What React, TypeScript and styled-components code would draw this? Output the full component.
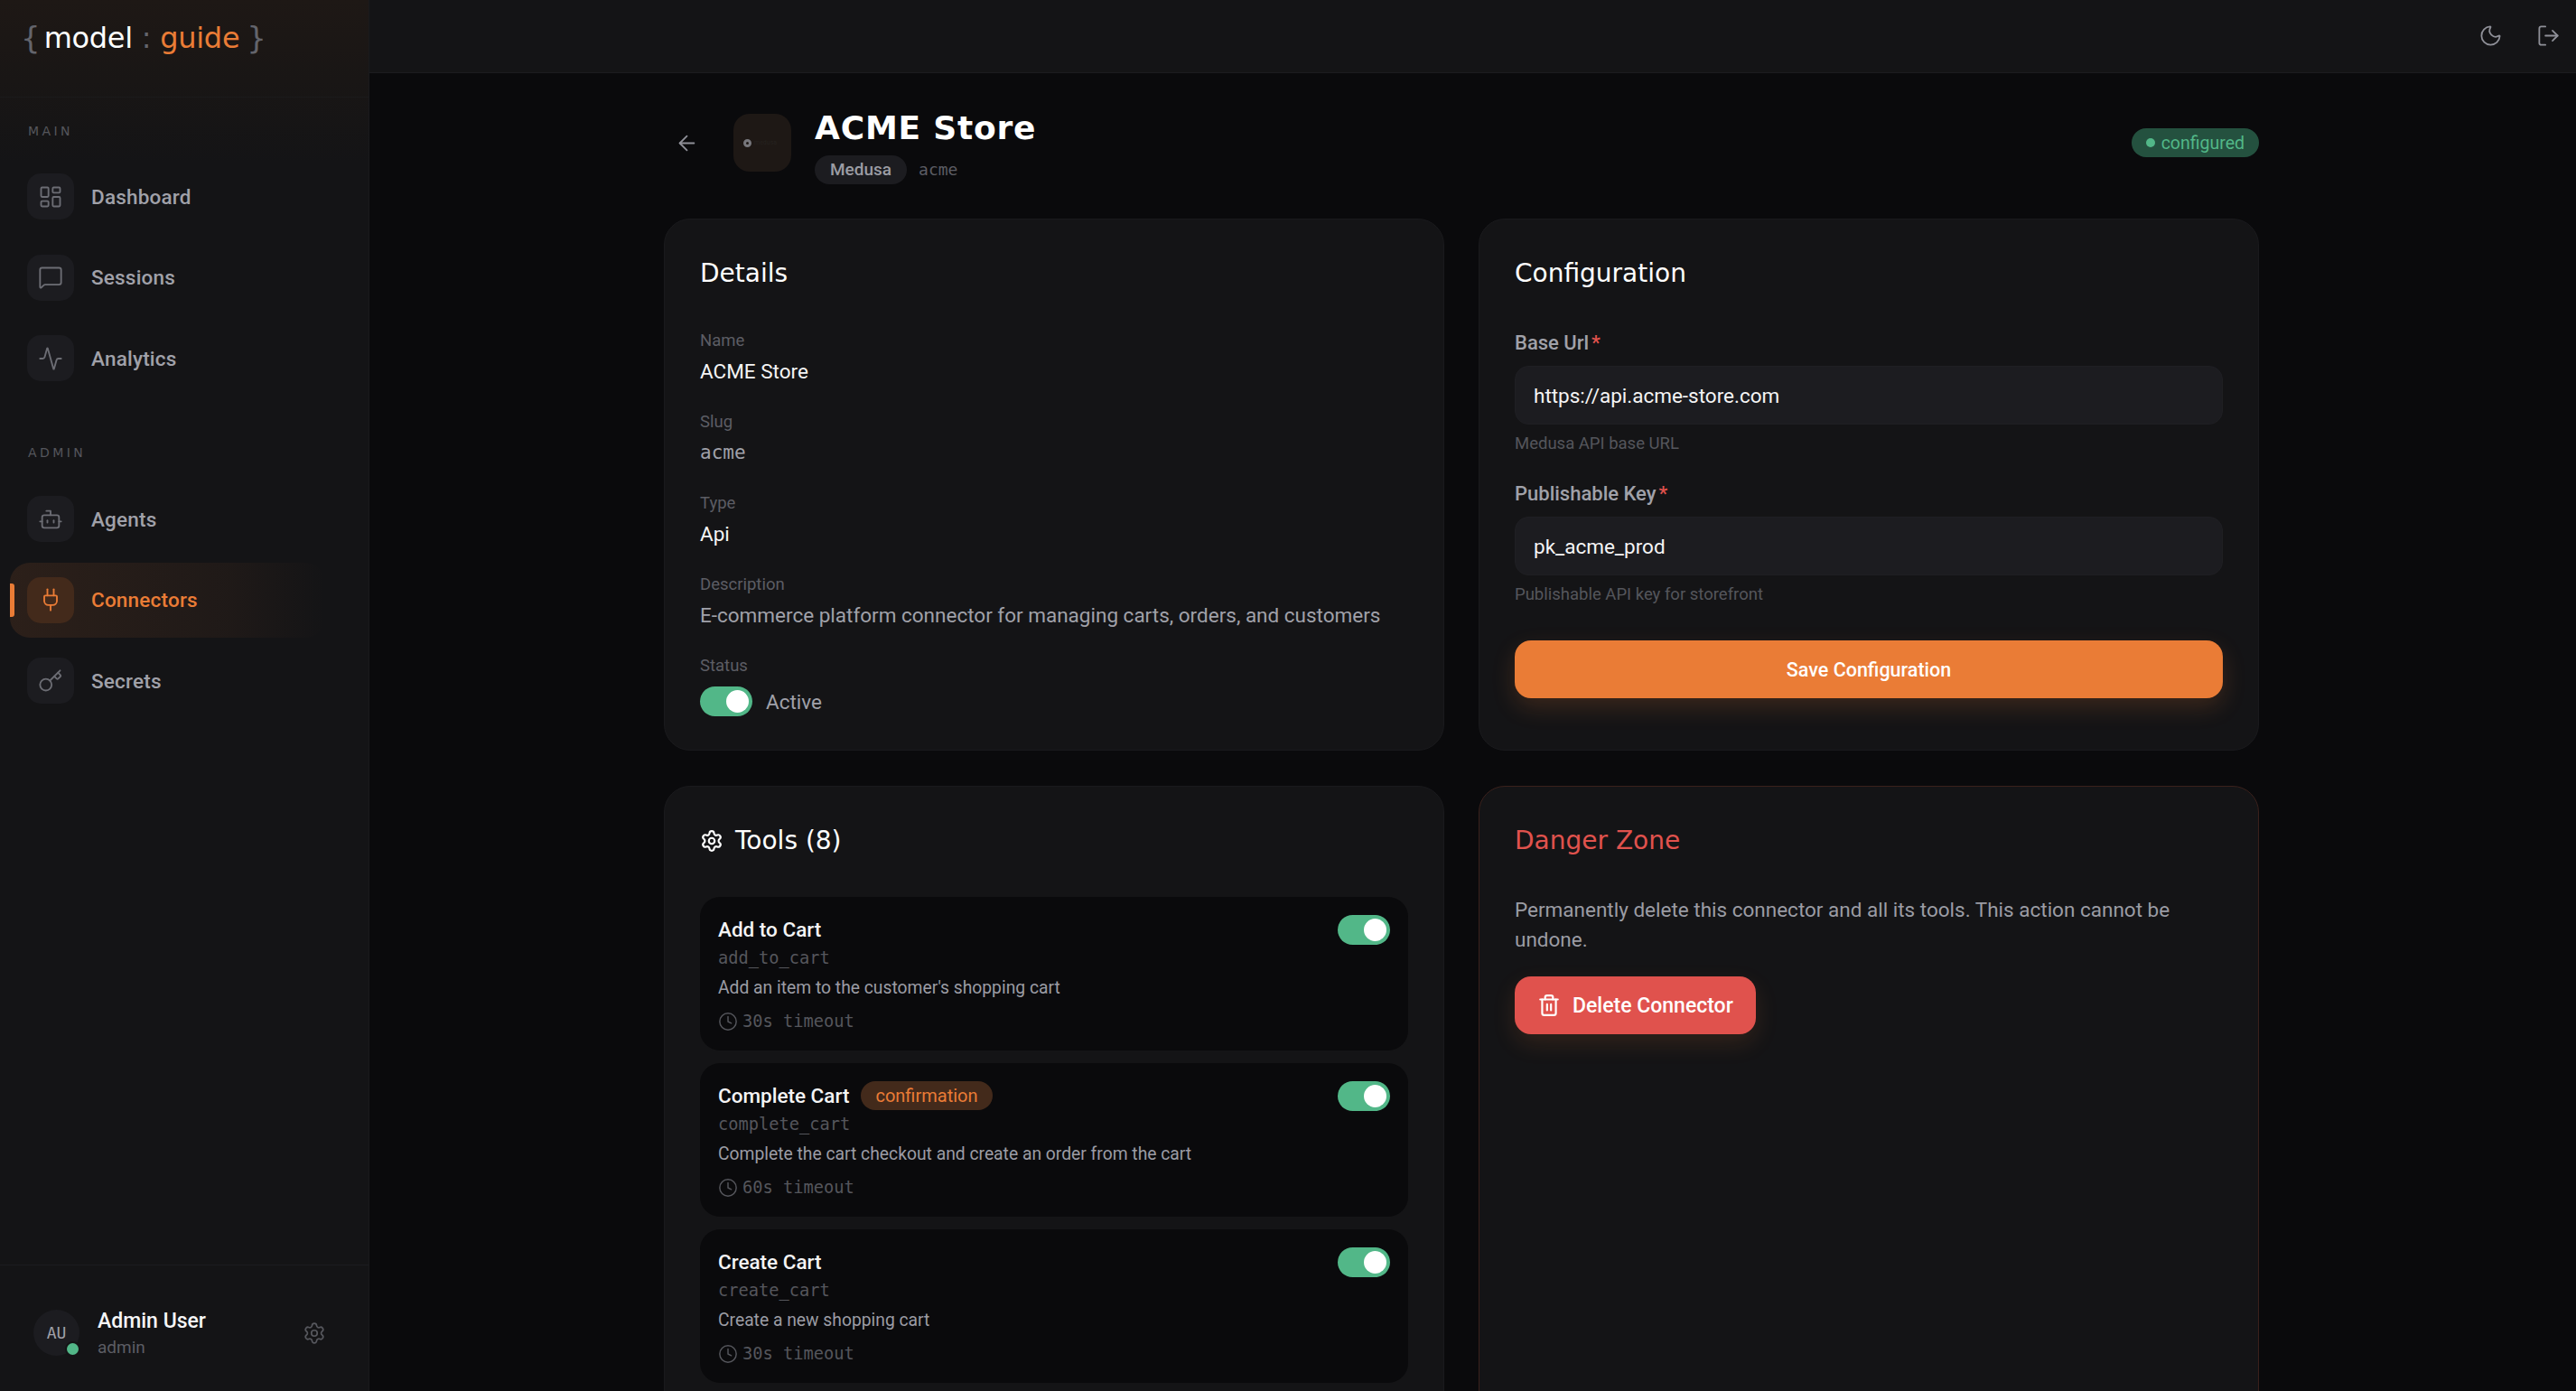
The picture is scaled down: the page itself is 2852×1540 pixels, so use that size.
import React from 'react';
import styled, { createGlobalStyle } from 'styled-components';
import {
  Activity,
  ArrowLeft,
  Bot,
  Clock,
  Key,
  LayoutDashboard,
  LogOut,
  MessageSquare,
  Moon,
  Plug,
  Settings,
  Trash2,
} from 'lucide-react';

const SANS = `'Roboto', 'Liberation Sans', sans-serif`;
const MONO = `'DejaVu Sans Mono', 'Liberation Mono', monospace`;
const DISPLAY = `'DejaVu Sans', 'Liberation Sans', sans-serif`;

const ORANGE = '#ea7c36';
const GREEN = '#52b788';
const RED = '#e0524d';

const GlobalStyle = createGlobalStyle`
  html, body {
    margin: 0;
    height: 100%;
    overflow: hidden;
    background: #0a0a0c;
    font-family: ${SANS};
  }
  * { box-sizing: border-box; }
`;

const Shell = styled.div`
  display: flex;
  width: 2852px;
  height: 1540px;
  overflow: hidden;
`;

/* sidebar */

const Sidebar = styled.aside`
  width: 409px;
  flex-shrink: 0;
  display: flex;
  flex-direction: column;
  background: linear-gradient(180deg, #1e1815 0, #191615 90px, #141416 180px);
  border-right: 1px solid #1a1a1d;
`;

const LogoBar = styled.div`
  height: 108px;
  padding: 0 0 24px 23px;
  display: flex;
  align-items: center;
  border-bottom: 1px solid #1b1a1b;
`;

const Logo = styled.div`
  display: flex;
  align-items: center;
  font-family: ${DISPLAY};
  font-size: 32px;
  letter-spacing: -0.3px;
  line-height: 1;
`;

const Brace = styled.span`
  color: #63646b;
  font-size: 34px;
  font-weight: 400;
  letter-spacing: 0;
`;

const LogoWord = styled.span<{ $accent?: boolean }>`
  color: ${(p) => (p.$accent ? ORANGE : '#ffffff')};
  margin: ${(p) => (p.$accent ? '0 8px 0 10px' : '0 10px 0 4px')};
`;

const LogoColon = styled.span`
  color: #63646b;
`;

const Nav = styled.nav`
  flex: 1;
  padding: 26px 48px 0 11px;
`;

const SectionTitle = styled.div<{ $gap?: boolean }>`
  height: 22px;
  line-height: 22px;
  margin: ${(p) => (p.$gap ? '52px' : '0')} 0 ${(p) => (p.$gap ? '21px' : '20px')} 20px;
  font-family: ${DISPLAY};
  font-size: 14px;
  letter-spacing: 3.4px;
  color: #55565c;
`;

const NavRow = styled.div<{ $active?: boolean }>`
  position: relative;
  height: 83px;
  margin-bottom: 6.5px;
  padding-left: 19px;
  display: flex;
  align-items: center;
  gap: 19px;
  border-radius: 22px;
  font-size: 22.5px;
  letter-spacing: 0.2px;
  font-weight: 500;
  color: ${(p) => (p.$active ? ORANGE : '#a0a1a9')};
  background: ${(p) =>
    p.$active ? 'linear-gradient(90deg, rgba(237,125,54,.11), rgba(237,125,54,.05) 70%, rgba(237,125,54,0))' : 'none'};
`;

const NavMark = styled.span`
  position: absolute;
  left: 0;
  top: 23px;
  width: 5px;
  height: 37px;
  border-radius: 0 3px 3px 0;
  background: ${ORANGE};
`;

const NavIcon = styled.span<{ $active?: boolean }>`
  width: 52px;
  height: 51px;
  display: flex;
  align-items: center;
  justify-content: center;
  border-radius: 15px;
  color: ${(p) => (p.$active ? ORANGE : '#6c6d74')};
  background: ${(p) => (p.$active ? '#432a1b' : '#1c1c20')};
`;

const UserBar = styled.div`
  height: 140px;
  padding: 49px 47px 0 37px;
  display: flex;
  align-items: flex-start;
  border-top: 1px solid #1c1c1f;
`;

const Avatar = styled.div`
  position: relative;
  width: 51px;
  height: 51px;
  margin-right: 20px;
  display: flex;
  align-items: center;
  justify-content: center;
  border-radius: 50%;
  background: #1c1c20;
  font-family: ${MONO};
  font-size: 18px;
  color: #a0a1a9;
`;

const AvatarDot = styled.span`
  position: absolute;
  right: -1px;
  bottom: -1px;
  width: 17px;
  height: 17px;
  border-radius: 50%;
  background: ${GREEN};
  border: 2px solid #141416;
`;

const UserInfo = styled.div`
  flex: 1;
  margin-top: -1px;
`;

const UserName = styled.div`
  font-size: 23px;
  line-height: 28px;
  font-weight: 500;
  color: #f6f6f7;
`;

const UserRole = styled.div`
  font-size: 19px;
  line-height: 24px;
  margin-top: 3px;
  color: #5c5d64;
`;

const UserGear = styled.span`
  margin-top: 13px;
  color: #56575d;
  display: flex;
`;

/* main area */

const Body = styled.div`
  flex: 1;
  min-width: 0;
  display: flex;
  flex-direction: column;
`;

const TopBar = styled.header`
  height: 81px;
  flex-shrink: 0;
  padding: 0 17px 2px 0;
  display: flex;
  align-items: center;
  justify-content: flex-end;
  gap: 37px;
  background: #141416;
  border-bottom: 1px solid #1c1c1f;
  color: #8f9098;
`;

const Main = styled.main`
  flex: 1;
  overflow: hidden;
  padding: 33px 0 0 326px;
`;

const Content = styled.div`
  width: 1766px;
`;

const PageHeader = styled.div`
  height: 88px;
  margin-bottom: 40px;
  display: flex;
  align-items: center;
`;

const BackButton = styled.span`
  width: 50px;
  height: 50px;
  margin-right: 27px;
  display: flex;
  align-items: center;
  justify-content: center;
  color: #8f9098;
`;

const ConnectorLogo = styled.div`
  width: 64px;
  height: 64px;
  margin-right: 26px;
  padding-left: 11px;
  display: flex;
  align-items: center;
  gap: 3px;
  border-radius: 18px;
  background: #1e1815;
  font-size: 7px;
  color: #25221f;
`;

const LogoRing = styled.span`
  width: 9px;
  height: 9px;
  border-radius: 50%;
  border: 3px solid #77777c;
`;

const HeaderText = styled.div`
  flex: 1;
  padding-top: 6px;
`;

const Title = styled.h1`
  margin: 0 0 7px;
  font-family: ${DISPLAY};
  font-size: 36px;
  line-height: 46px;
  font-weight: 700;
  letter-spacing: 0.8px;
  color: #ffffff;
`;

const MetaRow = styled.div`
  display: flex;
  align-items: center;
  gap: 13px;
`;

const TypeBadge = styled.span`
  height: 32px;
  padding: 0 17px;
  display: flex;
  align-items: center;
  border-radius: 16px;
  background: #1c1c20;
  font-size: 19px;
  font-weight: 500;
  color: #9b9ca4;
`;

const SlugText = styled.span`
  font-family: ${MONO};
  font-size: 18px;
  color: #5c5d64;
`;

const StatusBadge = styled.span`
  height: 32px;
  padding: 0 16px;
  display: flex;
  align-items: center;
  gap: 7px;
  border-radius: 16px;
  background: #24513f;
  font-size: 19.5px;
  color: ${GREEN};
`;

const StatusDot = styled.span`
  width: 10px;
  height: 10px;
  border-radius: 50%;
  background: ${GREEN};
`;

const Grid = styled.div`
  display: grid;
  grid-template-columns: 864px 864px;
  grid-template-rows: 589px auto;
  column-gap: 38px;
  row-gap: 39px;
`;

const Card = styled.section<{ $danger?: boolean }>`
  padding: 39px;
  border-radius: 29px;
  background: #141416;
  border: 1px solid ${(p) => (p.$danger ? '#3a211c' : '#1a1a1d')};
`;

const CardTitle = styled.h2<{ $danger?: boolean }>`
  margin: 0;
  display: flex;
  align-items: center;
  gap: 13px;
  height: 41px;
  font-family: ${DISPLAY};
  font-size: 28px;
  font-weight: 500;
  letter-spacing: 0;
  color: ${(p) => (p.$danger ? RED : '#ffffff')};
`;

const DetailsList = styled.div`
  margin-top: 42px;
  display: flex;
  flex-direction: column;
  gap: 28px;
`;

const FieldLabel = styled.div`
  font-size: 18.5px;
  line-height: 24px;
  color: #5c5d64;
`;

const FieldValue = styled.div<{ $mono?: boolean; $muted?: boolean }>`
  margin-top: 6px;
  font-family: ${(p) => (p.$mono ? MONO : SANS)};
  font-size: ${(p) => (p.$mono ? '21px' : '22.5px')};
  line-height: 32px;
  color: ${(p) => (p.$mono ? '#a0a1a9' : p.$muted ? '#a0a1a9' : '#f4f4f5')};
`;

const StatusRow = styled.div`
  margin-top: 11px;
  display: flex;
  align-items: center;
  gap: 15px;
  font-size: 22.5px;
  color: #a0a1a9;
`;

const Switch = styled.span`
  position: relative;
  width: 58px;
  height: 33px;
  border-radius: 17px;
  background: ${GREEN};
`;

const SwitchKnob = styled.span`
  position: absolute;
  top: 4px;
  right: 4px;
  width: 25px;
  height: 25px;
  border-radius: 50%;
  background: #ffffff;
`;

const Form = styled.div`
  margin-top: 42px;
`;

const InputLabel = styled.div`
  font-size: 22px;
  line-height: 30px;
  font-weight: 500;
  color: #a0a1a9;
`;

const Star = styled.span`
  margin-left: 3px;
  color: ${RED};
`;

const TextInput = styled.input`
  display: block;
  width: 100%;
  height: 65px;
  margin-top: 10px;
  padding: 0 20px;
  border: 1px solid #1f1f23;
  border-radius: 15px;
  outline: none;
  background: #1c1c20;
  font-family: ${SANS};
  font-size: 22.5px;
  color: #f4f4f5;
`;

const Hint = styled.div`
  height: 24px;
  margin: 9px 0 29px;
  font-size: 18.5px;
  line-height: 24px;
  color: #55565c;
`;

const SaveButton = styled.button`
  display: block;
  width: 100%;
  height: 64px;
  margin-top: 39px;
  border: 0;
  border-radius: 18px;
  background: ${ORANGE};
  box-shadow: 0 10px 26px rgba(237, 125, 54, 0.18);
  font-family: ${SANS};
  font-size: 21.5px;
  font-weight: 500;
  color: #ffffff;
`;

const ToolList = styled.div`
  margin-top: 42px;
  display: flex;
  flex-direction: column;
  gap: 14px;
`;

const ToolItem = styled.div`
  position: relative;
  height: 170px;
  padding: 20px;
  border-radius: 22px;
  background: #0a0a0c;
`;

const ToolSwitch = styled(Switch)`
  position: absolute;
  top: 20px;
  right: 20px;
`;

const ToolName = styled.div`
  display: flex;
  align-items: center;
  gap: 13px;
  height: 32px;
  font-size: 22.5px;
  font-weight: 500;
  color: #f4f4f5;
`;

const ConfirmBadge = styled.span`
  height: 32px;
  padding: 0 16px;
  display: flex;
  align-items: center;
  border-radius: 16px;
  background: #432a1b;
  font-size: 20px;
  font-weight: 400;
  color: ${ORANGE};
`;

const ToolSlug = styled.div`
  margin-top: 3px;
  font-family: ${MONO};
  font-size: 18.7px;
  line-height: 26px;
  color: #55565c;
`;

const ToolDesc = styled.div`
  margin-top: 7px;
  font-size: 19.3px;
  line-height: 26px;
  color: #9b9ca4;
`;

const ToolTimeout = styled.div`
  margin-top: 11px;
  display: flex;
  align-items: center;
  gap: 5px;
  font-family: ${MONO};
  font-size: 18.7px;
  line-height: 26px;
  color: #55565c;
`;

const DangerText = styled.p`
  margin: 40px 0 0;
  font-size: 22.5px;
  line-height: 33px;
  color: #9b9ca4;
`;

const DeleteButton = styled.button`
  height: 64px;
  margin-top: 24px;
  padding: 0 25px;
  display: flex;
  align-items: center;
  gap: 13px;
  border: 0;
  border-radius: 18px;
  background: ${RED};
  box-shadow: 0 10px 26px rgba(237, 125, 54, 0.14);
  font-family: ${SANS};
  font-size: 23px;
  font-weight: 500;
  color: #ffffff;
`;

const mainNav = [
  { label: 'Dashboard', icon: LayoutDashboard },
  { label: 'Sessions', icon: MessageSquare },
  { label: 'Analytics', icon: Activity },
];

const adminNav = [
  { label: 'Agents', icon: Bot },
  { label: 'Connectors', icon: Plug, active: true },
  { label: 'Secrets', icon: Key },
];

const tools = [
  { name: 'Add to Cart', slug: 'add_to_cart', desc: "Add an item to the customer's shopping cart", timeout: '30s timeout' },
  {
    name: 'Complete Cart',
    slug: 'complete_cart',
    desc: 'Complete the cart checkout and create an order from the cart',
    timeout: '60s timeout',
    confirm: true,
  },
  { name: 'Create Cart', slug: 'create_cart', desc: 'Create a new shopping cart', timeout: '30s timeout' },
];

type NavEntry = { label: string; icon: typeof Bot; active?: boolean };

function NavLink({ label, icon: Icon, active }: NavEntry) {
  return (
    <NavRow $active={active}>
      {active && <NavMark />}
      <NavIcon $active={active}>
        <Icon size={28} strokeWidth={1.6} />
      </NavIcon>
      {label}
    </NavRow>
  );
}

export default function App() {
  return (
    <Shell>
      <GlobalStyle />
      <Sidebar>
        <LogoBar>
          <Logo>
            <Brace>{'{'}</Brace>
            <LogoWord>model</LogoWord>
            <LogoColon>:</LogoColon>
            <LogoWord $accent>guide</LogoWord>
            <Brace>{'}'}</Brace>
          </Logo>
        </LogoBar>
        <Nav>
          <SectionTitle>MAIN</SectionTitle>
          {mainNav.map((n) => (
            <NavLink key={n.label} {...n} />
          ))}
          <SectionTitle $gap>ADMIN</SectionTitle>
          {adminNav.map((n) => (
            <NavLink key={n.label} {...n} />
          ))}
        </Nav>
        <UserBar>
          <Avatar>
            AU
            <AvatarDot />
          </Avatar>
          <UserInfo>
            <UserName>Admin User</UserName>
            <UserRole>admin</UserRole>
          </UserInfo>
          <UserGear>
            <Settings size={26} strokeWidth={1.6} />
          </UserGear>
        </UserBar>
      </Sidebar>
      <Body>
        <TopBar>
          <Moon size={27} strokeWidth={1.6} />
          <LogOut size={27} strokeWidth={1.6} />
        </TopBar>
        <Main>
          <Content>
            <PageHeader>
              <BackButton>
                <ArrowLeft size={27} strokeWidth={1.6} />
              </BackButton>
              <ConnectorLogo>
                <LogoRing />
                medusa
              </ConnectorLogo>
              <HeaderText>
                <Title>ACME Store</Title>
                <MetaRow>
                  <TypeBadge>Medusa</TypeBadge>
                  <SlugText>acme</SlugText>
                </MetaRow>
              </HeaderText>
              <StatusBadge>
                <StatusDot />
                configured
              </StatusBadge>
            </PageHeader>
            <Grid>
              <Card>
                <CardTitle>Details</CardTitle>
                <DetailsList>
                  <div>
                    <FieldLabel>Name</FieldLabel>
                    <FieldValue>ACME Store</FieldValue>
                  </div>
                  <div>
                    <FieldLabel>Slug</FieldLabel>
                    <FieldValue $mono>acme</FieldValue>
                  </div>
                  <div>
                    <FieldLabel>Type</FieldLabel>
                    <FieldValue>Api</FieldValue>
                  </div>
                  <div>
                    <FieldLabel>Description</FieldLabel>
                    <FieldValue $muted>E-commerce platform connector for managing carts, orders, and customers</FieldValue>
                  </div>
                  <div>
                    <FieldLabel>Status</FieldLabel>
                    <StatusRow>
                      <Switch>
                        <SwitchKnob />
                      </Switch>
                      Active
                    </StatusRow>
                  </div>
                </DetailsList>
              </Card>
              <Card>
                <CardTitle>Configuration</CardTitle>
                <Form>
                  <InputLabel>
                    Base Url<Star>*</Star>
                  </InputLabel>
                  <TextInput readOnly value="https://api.acme-store.com" />
                  <Hint>Medusa API base URL</Hint>
                  <InputLabel>
                    Publishable Key<Star>*</Star>
                  </InputLabel>
                  <TextInput readOnly value="pk_acme_prod" />
                  <Hint>Publishable API key for storefront</Hint>
                  <SaveButton>Save Configuration</SaveButton>
                </Form>
              </Card>
              <Card>
                <CardTitle>
                  <Settings size={26} strokeWidth={2} />
                  Tools (8)
                </CardTitle>
                <ToolList>
                  {tools.map((t) => (
                    <ToolItem key={t.slug}>
                      <ToolSwitch>
                        <SwitchKnob />
                      </ToolSwitch>
                      <ToolName>
                        {t.name}
                        {t.confirm && <ConfirmBadge>confirmation</ConfirmBadge>}
                      </ToolName>
                      <ToolSlug>{t.slug}</ToolSlug>
                      <ToolDesc>{t.desc}</ToolDesc>
                      <ToolTimeout>
                        <Clock size={22} strokeWidth={1.6} />
                        {t.timeout}
                      </ToolTimeout>
                    </ToolItem>
                  ))}
                </ToolList>
              </Card>
              <Card $danger>
                <CardTitle $danger>Danger Zone</CardTitle>
                <DangerText>Permanently delete this connector and all its tools. This action cannot be undone.</DangerText>
                <DeleteButton>
                  <Trash2 size={26} strokeWidth={2} />
                  Delete Connector
                </DeleteButton>
              </Card>
            </Grid>
          </Content>
        </Main>
      </Body>
    </Shell>
  );
}
